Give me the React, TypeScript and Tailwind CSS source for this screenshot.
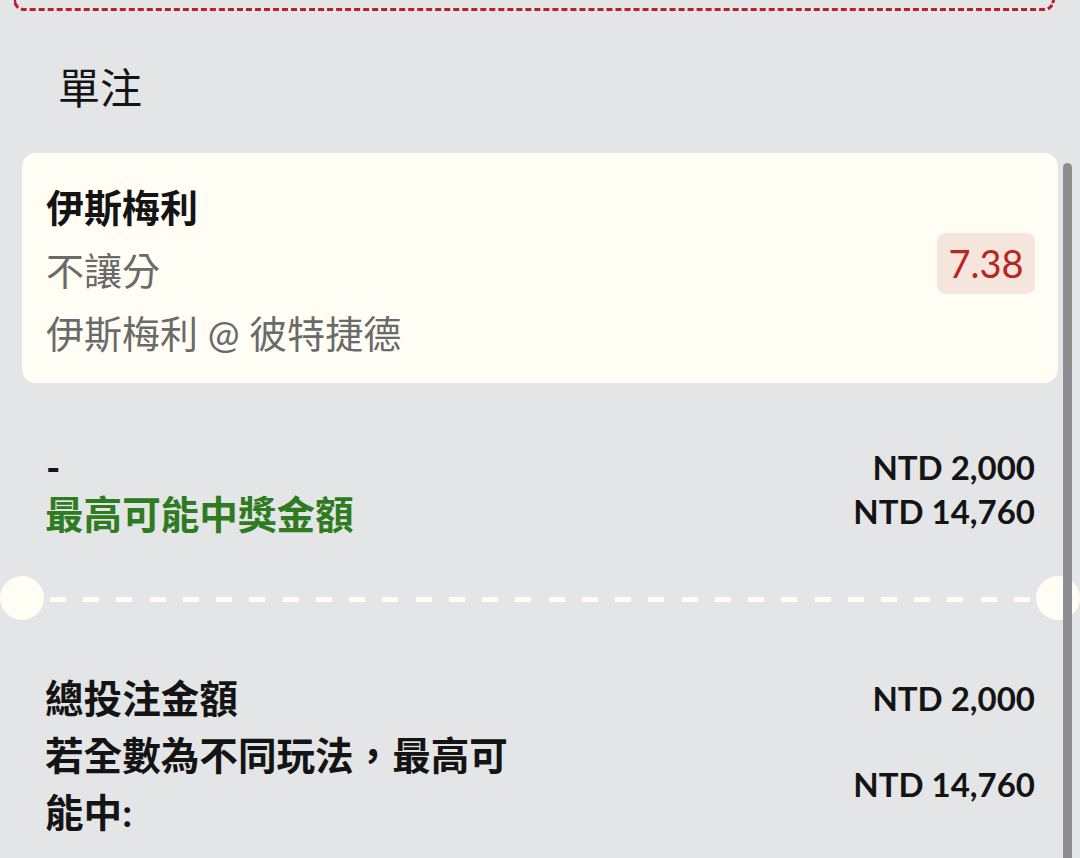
import React from "react";

export default function App() {
  return (
    <div className="relative w-[1080px] h-[858px] overflow-hidden bg-[#e4e5e7] font-['Lato','Noto_Sans_CJK_TC',sans-serif] text-[#141414]">
      {/* bottom of previous dashed card */}
      <div className="ml-[13px] mr-[25px] h-[11px] border-[3px] border-t-0 border-dashed border-[#bc1e2d] rounded-b-[20px]" />

      <div className="mt-[49px] pl-[58px] text-[42px] leading-[56px] font-normal">單注</div>

      {/* selection card */}
      <div className="mt-[37px] mx-[22px] h-[230px] rounded-[14px] bg-[#fffdf4] pl-[24px] pr-[23px] pt-[23px] flex items-center justify-between">
        <div className="self-start flex flex-col text-[38px] leading-[63px]">
          <div className="font-bold text-[#141414]">伊斯梅利</div>
          <div className="text-[#6a6a6a]">不讓分</div>
          <div className="text-[#6a6a6a]">伊斯梅利 @ 彼特捷德</div>
        </div>
        <div className="mb-[32px] h-[61px] w-[98px] rounded-[9px] bg-[#f6e5dd] flex items-center justify-center text-[38px] text-[#b6261f]">
          7.38
        </div>
      </div>

      {/* stake / potential win */}
      <div className="mt-[61px] mx-[22px] px-[23px] flex justify-between items-start">
        <div className="flex flex-col text-[38.6px] leading-[47px] font-bold">
          <div className="pl-[1px]">-</div>
          <div className="text-[#2f7b1f]">最高可能中獎金額</div>
        </div>
        <div className="mt-[1px] flex flex-col items-end text-[33px] leading-[44px] font-bold">
          <div>NTD 2,000</div>
          <div>NTD 14,760</div>
        </div>
      </div>

      {/* ticket separator */}
      <div className="mt-[38px] h-[44px] flex items-center">
        <div className="w-[44px] h-[44px] rounded-full bg-[#fffdf4] shrink-0" />
        <div className="flex-1 mx-[6px] mt-[3px] h-[5px] bg-[repeating-linear-gradient(to_right,#fffdf4_0px,#fffdf4_16px,transparent_16px,transparent_33.24px)]" />
        <div className="w-[44px] h-[44px] rounded-full bg-[#fffdf4] shrink-0" />
      </div>

      {/* totals */}
      <div className="mt-[50px] mx-[22px] px-[23px] flex flex-col font-bold">
        <div className="flex justify-between items-center leading-[57px]">
          <div className="text-[38.6px]">總投注金額</div>
          <div className="text-[33px]">NTD 2,000</div>
        </div>
        <div className="flex justify-between items-center leading-[57px]">
          <div className="w-[475px] text-[38.6px]">若全數為不同玩法，最高可能中:</div>
          <div className="text-[33px]">NTD 14,760</div>
        </div>
      </div>

      {/* overlay scrollbar */}
      <div className="absolute left-[1063px] top-[163px] bottom-0 w-[9px] rounded-t-full bg-[#8e8e92]" />
    </div>
  );
}
